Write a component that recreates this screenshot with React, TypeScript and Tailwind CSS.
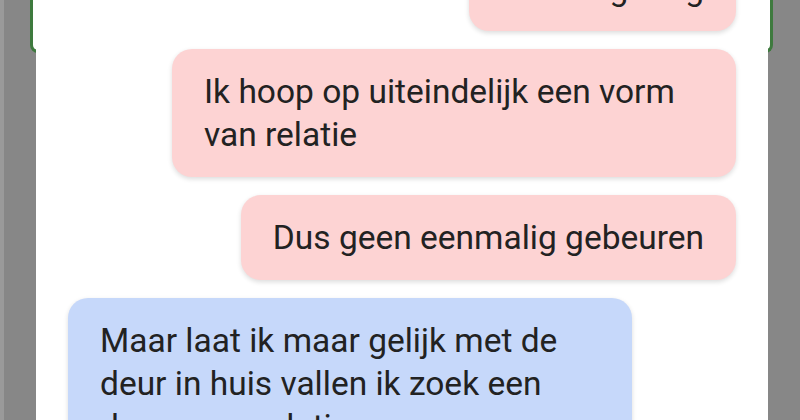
const messages = [
  { id: 1, text: 'Iets langdurig', mine: true },
  { id: 2, text: 'Ik hoop op uiteindelijk een vorm van relatie', mine: true },
  { id: 3, text: 'Dus geen eenmalig gebeuren', mine: true },
  {
    id: 4,
    text: 'Maar laat ik maar gelijk met de deur in huis vallen ik zoek een duurzame relatie',
    mine: false,
  },
];

export default function App() {
  return (
    <div className="relative w-[800px] h-[420px] overflow-hidden bg-[#878787] flex font-['Roboto',sans-serif]">
      <div className="w-[4px] bg-[#9a9a9a]" />

      {/* green frame peeking out behind the chat panel */}
      <div className="absolute left-[30px] right-[27px] top-0 h-[53px] bg-white border-x-[3px] border-b-[3px] border-[#3e7a3e] rounded-b-[8px]" />

      <div className="relative ml-[32px] w-[732px] h-full bg-white px-8">
        <div className="flex flex-col gap-[18px] mt-[-54px]">
          {messages.map(m => (
            <div key={m.id} className={m.mine ? 'flex justify-end' : 'flex justify-start'}>
              <div
                className={
                  m.mine
                    ? 'max-w-[564px] rounded-[20px] bg-[#fdd3d3] px-8 py-[21px] text-[33.5px] leading-[43px] text-[#222] shadow-[0_2px_5px_rgba(0,0,0,0.14)]'
                    : 'max-w-[564px] rounded-[20px] bg-[#c6d8fa] px-8 py-[21px] text-[33.5px] leading-[43px] text-[#222] shadow-[0_2px_5px_rgba(0,0,0,0.14)]'
                }
              >
                {m.text}
              </div>
            </div>
          ))}
        </div>
      </div>
    </div>
  );
}
